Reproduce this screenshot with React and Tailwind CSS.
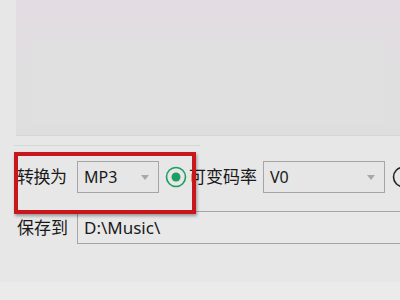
import React from 'react';

const FONT = { fontFamily: '"Noto Sans", "Noto Sans CJK SC", sans-serif' };

function Arrow() {
    return (
        <svg width="8" height="5" viewBox="0 0 8 5" className="shrink-0">
            <path d="M0 0 L8 0 L4 5 Z" fill="#a8a8a8" />
        </svg>
    );
}

function Dropdown({ value, width }) {
    return (
        <div className={`${width} shrink-0 h-[32px] border border-[#a5a5a5] bg-[#e6e6e6] flex items-center justify-between pl-[6px] pr-[9px]`}>
            <span className="text-[16px] text-[#1a1a1a] leading-none">{value}</span>
            <Arrow />
        </div>
    );
}

function Radio({ checked }) {
    return (
        <svg width="22" height="22" viewBox="0 0 22 22" className="shrink-0">
            <circle cx="11" cy="11" r="9.5" fill="none" stroke={checked ? '#1f9e62' : '#222'} strokeWidth="1.6" />
            {checked && <circle cx="11" cy="11" r="4.5" fill="#1f9e62" />}
        </svg>
    );
}

export default function App() {
    return (
        <div className="relative w-[400px] h-[300px] overflow-hidden bg-[#e7e7e7]" style={FONT}>
            {/* preview panel */}
            <div className="ml-4 h-[136px] pt-[40px] bg-gradient-to-b from-[#e3dbe1] via-[#e0dfe0] to-[#dedede] border-b border-[#d6d6d6]">
                <div className="mx-[16px] h-[84px] bg-[#e0e0e0]"></div>
            </div>
            <div className="ml-[14px] mt-[9px] w-[186px] h-px bg-[#cfdccf]"></div>

            {/* convert row */}
            <div className="flex items-center mt-[15px] h-[32px]">
                <span className="w-[77px] shrink-0 pl-[17px] text-[17px] text-[#1a1a1a] tracking-[-0.5px]">转换为</span>
                <Dropdown value="MP3" width="w-[82px]" />
                <div className="ml-[6px] shrink-0"><Radio checked /></div>
                <span className="ml-[2px] w-[74px] shrink-0 text-[17px] text-[#1a1a1a] tracking-[0px]">可变码率</span>
                <Dropdown value="V0" width="w-[122px]" />
                <div className="ml-[7px] shrink-0"><Radio /></div>
            </div>

            {/* save row */}
            <div className="flex items-center mt-[18px] h-[33px]">
                <span className="w-[77px] shrink-0 pl-[17px] text-[17px] text-[#1a1a1a]">保存到</span>
                <div className="flex-1 h-[33px] border border-r-0 border-[#a5a5a5] bg-[#e8e8e8] flex items-center pl-[6px]">
                    <span className="text-[17px] text-[#1a1a1a] leading-none">D:\Music\</span>
                </div>
            </div>

            <div className="absolute left-0 right-0 bottom-0 h-[18px] bg-[#ebebeb]"></div>

            {/* red highlight annotation */}
            <div className="absolute left-[14px] top-[152px] w-[182px] h-[62px] border-[4px] border-[#c8161d] shadow-[1px_2px_3px_rgba(0,0,0,0.35)]"></div>
        </div>
    );
}
